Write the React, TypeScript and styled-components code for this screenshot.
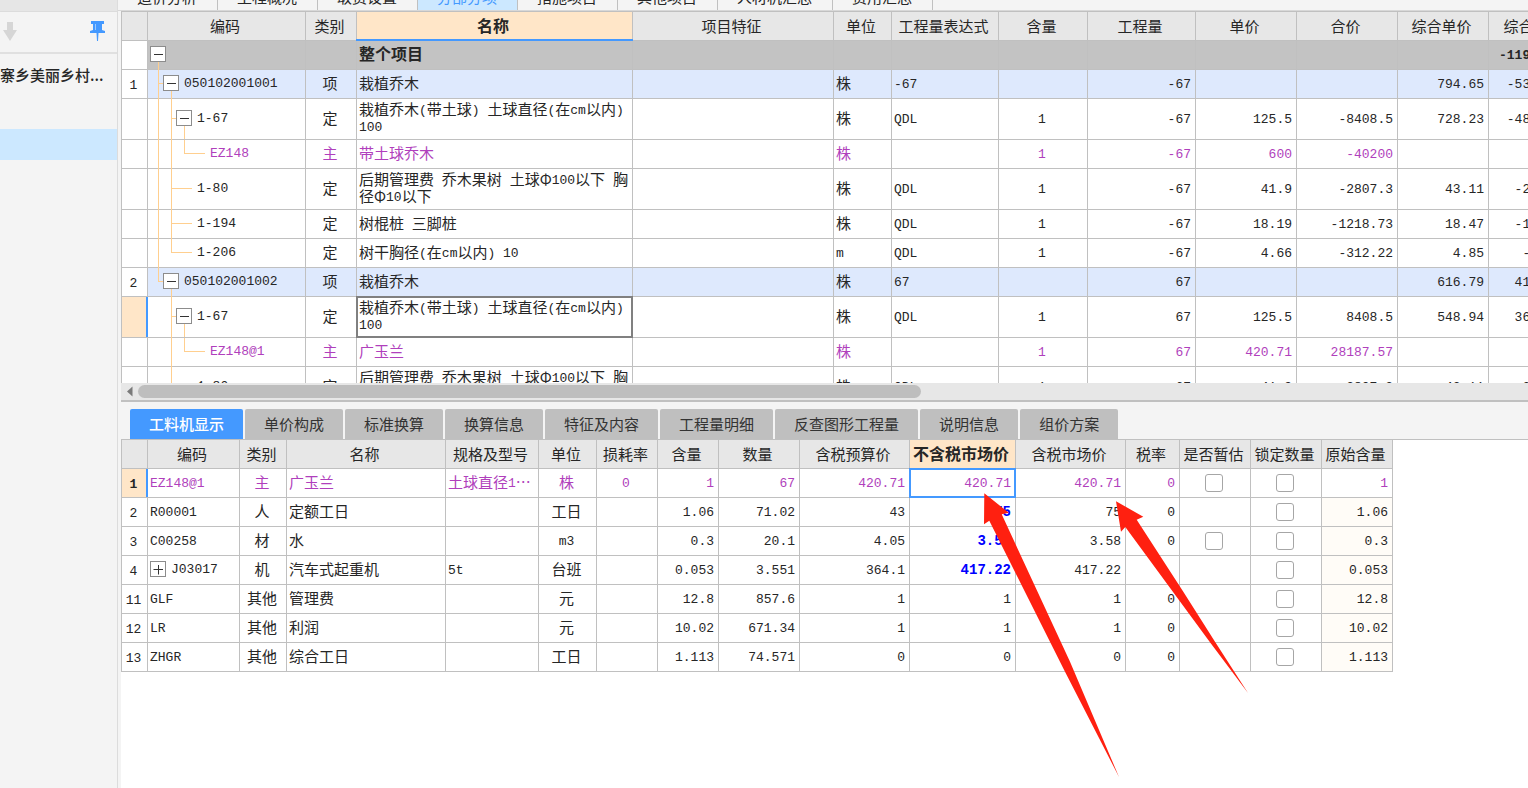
import React, { Fragment } from 'react';
import styled, { createGlobalStyle, css } from 'styled-components';

const GRID = '#c0c0c0';
const BLUE = '#4499ff';
const PURPLE = '#b03fbc';
const LINE = '#ffcf8f';

const GlobalStyle = createGlobalStyle`
  * { box-sizing: border-box; }
  body {
    margin: 0;
    background: #ffffff;
    color: #262626;
    font: 15px/17px "Noto Sans CJK SC", "Liberation Sans", sans-serif;
    overflow: hidden;
  }
`;

const Page = styled.div`
  display: flex;
  min-height: 100vh;
`;

/* ---------- side panel ---------- */

const Side = styled.aside`
  flex: 0 0 118px;
  background: #f4f4f4;
  border-right: 1px solid #dcdcdc;
`;

const SideCap = styled.div`
  height: 12px;
  background: #e6e6e6;
  border-bottom: 1px solid #dcdcdc;
`;

const SideTools = styled.div`
  display: flex;
  align-items: center;
  justify-content: space-between;
  height: 42px;
  padding: 0 12px 2px 2px;
  border-bottom: 2px solid #e0e0e0;
`;

const IconButton = styled.button`
  display: flex;
  padding: 0;
  border: 0;
  background: none;
`;

const ProjectName = styled.div`
  height: 75px;
  padding-top: 12px;
  font-weight: 500;
  white-space: nowrap;
  overflow: hidden;
`;

const SelectedNode = styled.div`
  height: 31px;
  background: #cce8ff;
`;

/* ---------- main area ---------- */

const Main = styled.main`
  flex: 1;
  min-width: 0;
  display: flex;
  flex-direction: column;
`;

const TopTabs = styled.nav`
  display: flex;
  align-items: flex-end;
  height: 11px;
  overflow: hidden;
  background: #f4f4f4;
  border-bottom: 1px solid #d8d8d8;
`;

const TopTab = styled.button<{ $active?: boolean }>`
  flex: none;
  height: 28px;
  padding: 0 20px 0 19px;
  border: 0;
  border-right: 1px solid ${GRID};
  background: ${p => (p.$active ? '#cce8ff' : '#f4f4f4')};
  color: ${p => (p.$active ? BLUE : '#262626')};
  font: inherit;
`;

const Gutter = styled.div`
  padding-left: 3px;
  background: #f4f4f4;
`;

const UpperPane = styled.section`
  height: 372px;
  overflow: hidden;
  background: #ffffff;
  border-top: 1px solid ${GRID};
  border-left: 1px solid ${GRID};
`;

const Sheet = styled.table`
  table-layout: fixed;
  width: 0;
  border-collapse: separate;
  border-spacing: 0;
`;

const HeadCell = styled.th<{ $active?: boolean; $mark?: boolean }>`
  position: relative;
  height: 29px;
  padding: 0 3px 2px 0;
  background: ${p => (p.$active ? '#ffe6c8' : '#e7e7e7')};
  border-right: 1px solid ${GRID};
  border-bottom: 1px solid ${GRID};
  font-size: ${p => (p.$active ? 16 : 15)}px;
  font-weight: ${p => (p.$active ? 700 : 400)};
  white-space: nowrap;
  ${p => p.$mark && css`
    &::after {
      content: '';
      position: absolute;
      left: -1px;
      right: -1px;
      bottom: -1px;
      height: 2px;
      background: ${BLUE};
    }
  `}
`;

const Latin = styled.span`
  font-family: "Liberation Mono", "Noto Sans CJK SC", monospace;
  font-size: 13px;
  line-height: 13px;
  vertical-align: 1px;
`;

type Align = 'left' | 'center' | 'right';
type Tone = 'plain' | 'root' | 'item' | 'material';

const sidePadding: Record<Align, string> = { left: '0 0 4px 2px', center: '0 2px 4px 0', right: '0 4px 4px 0' };

const Cell = styled.td<{
  $align?: Align;
  $tall?: boolean;
  $flush?: boolean;
  $bg?: string;
  $color?: string;
  $bold?: boolean;
  $changed?: boolean;
  $frame?: string;
}>`
  position: relative;
  height: ${p => (p.$tall ? 41 : 29)}px;
  padding: ${p => sidePadding[p.$align ?? 'left']};
  text-align: ${p => p.$align ?? 'left'};
  background: ${p => p.$bg ?? '#ffffff'};
  color: ${p => p.$color ?? 'inherit'};
  border-right: 1px solid ${GRID};
  border-bottom: 1px solid ${GRID};
  ${p => p.$flush && css`
    padding-bottom: 0;
  `}
  ${p => p.$bold && css`
    font-size: 16px;
    font-weight: 700;
  `}
  ${p => p.$changed && css`
    color: #0000ff;
    font-weight: 700;
    ${Latin} { font-size: 14px; }
  `}
  ${p => p.$frame && css`
    &::after {
      content: '';
      position: absolute;
      inset: -1px;
      border: 2px solid ${p.$frame};
    }
  `}
`;

const RowNumber = styled.th<{ $current?: boolean }>`
  position: relative;
  padding: 0 2px 2px 0;
  background: ${p => (p.$current ? '#ffe6c8' : '#ffffff')};
  border-right: 1px solid ${GRID};
  border-bottom: 1px solid ${GRID};
  font-weight: ${p => (p.$current ? 700 : 400)};
  ${p => p.$current && css`
    &::after {
      content: '';
      position: absolute;
      top: 0;
      bottom: 0;
      right: -1px;
      width: 2px;
      z-index: 1;
      background: ${BLUE};
    }
  `}
`;

/* ---------- code tree ---------- */

const TreeCell = styled.div<{ $tall?: boolean }>`
  display: flex;
  align-items: center;
  height: ${p => (p.$tall ? 40 : 28)}px;
  padding-bottom: 2px;
`;

const Guide = styled.span<{ $kind: string }>`
  position: relative;
  flex: 0 0 13px;
  align-self: stretch;
  ${p => p.$kind !== 'none' && css`
    &::before {
      content: '';
      position: absolute;
      left: 8px;
      top: 0;
      bottom: ${p.$kind === 'end' ? '50%' : '-3px'};
      width: 1px;
      background: ${LINE};
      z-index: 1;
    }
  `}
  ${p => (p.$kind === 'tee' || p.$kind === 'end') && css`
    &::after {
      content: '';
      position: absolute;
      left: 8px;
      right: 0;
      top: 50%;
      height: 1px;
      background: ${LINE};
    }
  `}
`;

const LeafLine = styled.span`
  flex: 0 0 16px;
  align-self: stretch;
  position: relative;
  margin-right: 5px;
  &::after {
    content: '';
    position: absolute;
    left: 0;
    right: 0;
    top: 50%;
    height: 1px;
    background: ${LINE};
  }
`;

const Toggle = styled.button<{ $stem?: number }>`
  position: relative;
  flex: 0 0 16px;
  height: 16px;
  margin-right: 5px;
  padding: 0;
  border: 1px solid #8c8c8c;
  background: #ffffff;
  ${p => !!p.$stem && css`
    &::after {
      content: '';
      position: absolute;
      left: 7px;
      top: 15px;
      height: ${p.$stem}px;
      width: 1px;
      background: ${LINE};
      z-index: 1;
    }
  `}
  svg { display: block; }
`;

/* ---------- scrollbar, lower tabs ---------- */

const ScrollBar = styled.div`
  display: flex;
  align-items: center;
  gap: 5px;
  height: 19px;
  padding-left: 5px;
  background: #e7e7e7;
  border-bottom: 2px solid ${GRID};
`;

const ScrollThumb = styled.div`
  width: 783px;
  height: 13px;
  border-radius: 7px;
  background: #bebebe;
`;

const LowerTabs = styled.nav`
  display: flex;
  gap: 2px;
  height: 38px;
  padding: 7px 0 0 9px;
  border-bottom: 1px solid ${GRID};
`;

const LowerTab = styled.button<{ $active?: boolean }>`
  height: 30px;
  padding: 0 19px 1px;
  border: 0;
  border-radius: 2px 2px 0 0;
  background: ${p => (p.$active ? BLUE : '#bfbfbf')};
  color: ${p => (p.$active ? '#ffffff' : '#333333')};
  font: inherit;
  font-weight: ${p => (p.$active ? 500 : 400)};
  white-space: nowrap;
`;

const LowerWrap = styled.section`
  flex: 1;
  display: flex;
  padding-left: 3px;
  background: linear-gradient(to right, #f4f4f4 3px, #ffffff 3px);
`;

const LowerPane = styled.div`
  position: relative;
  flex: 1;
`;

const LowerSheet = styled(Sheet)`
  border-left: 1px solid ${GRID};
`;

const Check = styled.input`
  appearance: none;
  display: block;
  width: 18px;
  height: 18px;
  margin: 0 auto;
  border: 1px solid #a6a6a6;
  border-radius: 3px;
  background: #ffffff;
`;

const Arrows = styled.svg`
  position: absolute;
  left: 863px;
  top: 53px;
  pointer-events: none;
  z-index: 2;
`;

/* Latin runs use the narrow monospaced face, the rest the CJK face. */
function Mixed({ text }: { text: string }) {
  return (
    <>
      {text.split(/([\x20-\x7e]+)/).map((part, i) =>
        i % 2 ? <Latin key={i}>{part}</Latin> : <Fragment key={i}>{part}</Fragment>
      )}
    </>
  );
}

const Box = ({ plus, label, stem }: { plus?: boolean; label: string; stem?: number }) => (
  <Toggle type="button" aria-label={label} $stem={stem}>
    <svg width="14" height="14" viewBox="0 0 14 14" stroke="#333" strokeWidth="1">
      <path d={plus ? 'M2.5 7.5H12M7.5 3V12.5' : 'M3 7.5H12'} />
    </svg>
  </Toggle>
);

type Row = {
  no?: string;
  tone: Tone;
  code?: string;
  guides: string[];
  leaf?: boolean;
  current?: boolean;
  tall?: boolean;
  kind?: string;
  name: string;
  unit?: string;
  expr?: string;
  vals: string[];
};

const upperCols: [string, number][] = [
  ['', 26], ['编码', 158], ['类别', 51], ['名称', 276], ['项目特征', 201], ['单位', 58],
  ['工程量表达式', 107], ['含量', 89], ['工程量', 108], ['单价', 101], ['合价', 101],
  ['综合单价', 91], ['综合合价', 93],
];

const upperRows: Row[] = [
  { tone: 'root', guides: [], name: '整个项目', vals: ['', '', '', '', '', '-119462.18'] },
  { no: '1', tone: 'item', code: '050102001001', guides: ['tee'], kind: '项', name: '栽植乔木', unit: '株', expr: '-67', vals: ['', '-67', '', '', '794.65', '-53241.55'] },
  { tone: 'plain', code: '1-67', guides: ['thru', 'tee'], tall: true, kind: '定', name: '栽植乔木(带土球) 土球直径(在cm以内) 100', unit: '株', expr: 'QDL', vals: ['1', '-67', '125.5', '-8408.5', '728.23', '-48791.41'] },
  { tone: 'material', code: 'EZ148', guides: ['thru', 'thru', 'end'], leaf: true, kind: '主', name: '带土球乔木', unit: '株', vals: ['1', '-67', '600', '-40200', '', ''] },
  { tone: 'plain', code: '1-80', guides: ['thru', 'tee'], leaf: true, tall: true, kind: '定', name: '后期管理费 乔木果树 土球Φ100以下 胸径Φ10以下', unit: '株', expr: 'QDL', vals: ['1', '-67', '41.9', '-2807.3', '43.11', '-2888.37'] },
  { tone: 'plain', code: '1-194', guides: ['thru', 'tee'], leaf: true, kind: '定', name: '树棍桩 三脚桩', unit: '株', expr: 'QDL', vals: ['1', '-67', '18.19', '-1218.73', '18.47', '-1237.49'] },
  { tone: 'plain', code: '1-206', guides: ['thru', 'end'], leaf: true, kind: '定', name: '树干胸径(在cm以内) 10', unit: 'm', expr: 'QDL', vals: ['1', '-67', '4.66', '-312.22', '4.85', '-324.95'] },
  { no: '2', tone: 'item', code: '050102001002', guides: ['end'], kind: '项', name: '栽植乔木', unit: '株', expr: '67', vals: ['', '67', '', '', '616.79', '41324.93'] },
  { tone: 'plain', code: '1-67', guides: ['none', 'tee'], tall: true, current: true, kind: '定', name: '栽植乔木(带土球) 土球直径(在cm以内) 100', unit: '株', expr: 'QDL', vals: ['1', '67', '125.5', '8408.5', '548.94', '36778.98'] },
  { tone: 'material', code: 'EZ148@1', guides: ['none', 'thru', 'end'], leaf: true, kind: '主', name: '广玉兰', unit: '株', vals: ['1', '67', '420.71', '28187.57', '', ''] },
  { tone: 'plain', code: '1-80', guides: ['none', 'tee'], leaf: true, tall: true, kind: '定', name: '后期管理费 乔木果树 土球Φ100以下 胸径Φ10以下', unit: '株', expr: 'QDL', vals: ['1', '67', '41.9', '2807.3', '43.11', '2888.37'] },
];

const rowBg: Record<Tone, string> = {
  plain: '#ffffff', root: '#c3c3c3', item: '#dee9fd', material: '#ffffff',
};

function UpperRow({ row }: { row: Row }) {
  const common = {
    $bg: rowBg[row.tone],
    $color: row.tone === 'material' ? PURPLE : undefined,
    $bold: row.tone === 'root',
    $tall: row.tall,
  };
  return (
    <tr>
      <RowNumber scope="row" $current={row.current}><Latin>{row.no}</Latin></RowNumber>
      <Cell {...common} $flush>
        <TreeCell $tall={row.tall}>
          {row.guides.map((g, i) => <Guide key={i} $kind={g} />)}
          {row.leaf ? <LeafLine /> : <Box label="折叠" stem={row.tall ? 13 : 9} />}
          {row.code && <Latin>{row.code}</Latin>}
        </TreeCell>
      </Cell>
      <Cell {...common} $align="center">{row.kind}</Cell>
      <Cell {...common} $frame={row.current ? '#808080' : undefined}><Mixed text={row.name} /></Cell>
      <Cell {...common} />
      <Cell {...common}><Mixed text={row.unit ?? ''} /></Cell>
      <Cell {...common}><Mixed text={row.expr ?? ''} /></Cell>
      {row.vals.map((v, i) => (
        <Cell key={i} {...common} $align={i === 0 ? 'center' : 'right'}>
          {v && <Latin>{v}</Latin>}
        </Cell>
      ))}
    </tr>
  );
}

const lowerCols: [string, number, Align][] = [
  ['', 26, 'center'], ['编码', 92, 'left'], ['类别', 47, 'center'], ['名称', 159, 'left'],
  ['规格及型号', 93, 'left'], ['单位', 58, 'center'], ['损耗率', 61, 'center'], ['含量', 61, 'right'],
  ['数量', 81, 'right'], ['含税预算价', 110, 'right'], ['不含税市场价', 106, 'right'],
  ['含税市场价', 110, 'right'], ['税率', 54, 'right'], ['是否暂估', 71, 'center'],
  ['锁定数量', 71, 'center'], ['原始含量', 71, 'right'],
];

const lowerRows: string[][] = [
  ['1', 'EZ148@1', '主', '广玉兰', '土球直径1…', '株', '0', '1', '67', '420.71', '420.71', '420.71', '0', 'check', 'check', '1'],
  ['2', 'R00001', '人', '定额工日', '', '工日', '', '1.06', '71.02', '43', '75', '75', '0', '', 'check', '1.06'],
  ['3', 'C00258', '材', '水', '', 'm3', '', '0.3', '20.1', '4.05', '3.58', '3.58', '0', 'check', 'check', '0.3'],
  ['4', 'J03017', '机', '汽车式起重机', '5t', '台班', '', '0.053', '3.551', '364.1', '417.22', '417.22', '', '', 'check', '0.053'],
  ['11', 'GLF', '其他', '管理费', '', '元', '', '12.8', '857.6', '1', '1', '1', '0', '', 'check', '12.8'],
  ['12', 'LR', '其他', '利润', '', '元', '', '10.02', '671.34', '1', '1', '1', '0', '', 'check', '10.02'],
  ['13', 'ZHGR', '其他', '综合工日', '', '工日', '', '1.113', '74.571', '0', '0', '0', '0', '', 'check', '1.113'],
];

const EDITED = 10;

function LowerRow({ row, index }: { row: string[]; index: number }) {
  const first = index === 0;
  return (
    <tr>
      <RowNumber scope="row" $current={first}><Latin>{row[0]}</Latin></RowNumber>
      {row.slice(1).map((v, i) => {
        const c = i + 1;
        const expandable = v === 'J03017';
        return (
          <Cell
            key={c}
            $align={lowerCols[c][2]}
            $flush={v === 'check' || expandable}
            $color={first ? PURPLE : undefined}
            $changed={c === EDITED && index > 0 && index < 4}
            $bg={c === 15 && !first ? '#fffcf7' : undefined}
            $frame={first && c === EDITED ? BLUE : undefined}
          >
            {v === 'check' ? (
              <Check type="checkbox" aria-label={`${lowerCols[c][0]} ${row[1]}`} />
            ) : expandable ? (
              <TreeCell><Box plus label="展开" /><Latin>{v}</Latin></TreeCell>
            ) : (
              <Mixed text={v} />
            )}
          </Cell>
        );
      })}
    </tr>
  );
}

const topTabs = ['造价分析', '工程概况', '取费设置', '分部分项', '措施项目', '其他项目', '人材机汇总', '费用汇总'];
const lowerTabs = ['工料机显示', '单价构成', '标准换算', '换算信息', '特征及内容', '工程量明细', '反查图形工程量', '说明信息', '组价方案'];

export default function App() {
  return (
    <Page>
      <GlobalStyle />
      <Side>
        <SideCap />
        <SideTools>
          <IconButton type="button" aria-label="下移">
            <svg width="15" height="20" viewBox="0 0 15 20" fill="#d6d6d6">
              <path d="M5 1h6v8h4L8 20L1 9h4z" />
            </svg>
          </IconButton>
          <IconButton type="button" aria-label="固定">
            <svg width="15" height="20" viewBox="0 0 15 20" fill={BLUE}>
              <path d="M1 0h13v3h-2v6l3 1v2H8.500L8 20H7L6.500 12H0V10L3 9V3H1z" />
              <path d="M5 3h1v6H5z" fill="#9ccbff" />
            </svg>
          </IconButton>
        </SideTools>
        <ProjectName>寨乡美丽乡村...</ProjectName>
        <SelectedNode />
      </Side>
      <Main>
        <TopTabs>
          {topTabs.map(t => <TopTab key={t} type="button" $active={t === '分部分项'}>{t}</TopTab>)}
        </TopTabs>
        <Gutter>
          <UpperPane>
            <Sheet>
              <colgroup>{upperCols.map(([n, w], i) => <col key={n + i} width={w} />)}</colgroup>
              <thead>
                <tr>
                  {upperCols.map(([n], i) => (
                    <HeadCell key={i} scope="col" $active={n === '名称'} $mark={n === '名称'}>{n}</HeadCell>
                  ))}
                </tr>
              </thead>
              <tbody>{upperRows.map((r, i) => <UpperRow key={i} row={r} />)}</tbody>
            </Sheet>
          </UpperPane>
          <ScrollBar>
            <svg width="7" height="11" viewBox="0 0 7 11"><path d="M6.500 0.500V10.500L1 5.500z" fill="#7a7a7a" /></svg>
            <ScrollThumb />
          </ScrollBar>
          <LowerTabs>
            {lowerTabs.map((t, i) => <LowerTab key={t} type="button" $active={i === 0}>{t}</LowerTab>)}
          </LowerTabs>
        </Gutter>
        <LowerWrap>
          <LowerPane>
            <LowerSheet>
              <colgroup>{lowerCols.map(([n, w], i) => <col key={n + i} width={w} />)}</colgroup>
              <thead>
                <tr>
                  {lowerCols.map(([n], i) => (
                    <HeadCell key={i} scope="col" $active={i === EDITED}>{n}</HeadCell>
                  ))}
                </tr>
              </thead>
              <tbody>{lowerRows.map((r, i) => <LowerRow key={i} row={r} index={i} />)}</tbody>
            </LowerSheet>
            <Arrows width="265" height="285" viewBox="984 493 265 285" fill="#ff2010">
              <path d="M984.300 493.300L1008.700 512.700L1001.700 514.300L1070 661.700L1119 777L1065 671.700L989.300 520.700L984 524.300z" />
              <path d="M1116 501.300L1143.300 516.700L1136.700 519.700L1183.300 591.700L1215 641.700L1248 693L1210.700 643.300L1125.300 527L1121 531.700z" />
            </Arrows>
          </LowerPane>
        </LowerWrap>
      </Main>
    </Page>
  );
}
